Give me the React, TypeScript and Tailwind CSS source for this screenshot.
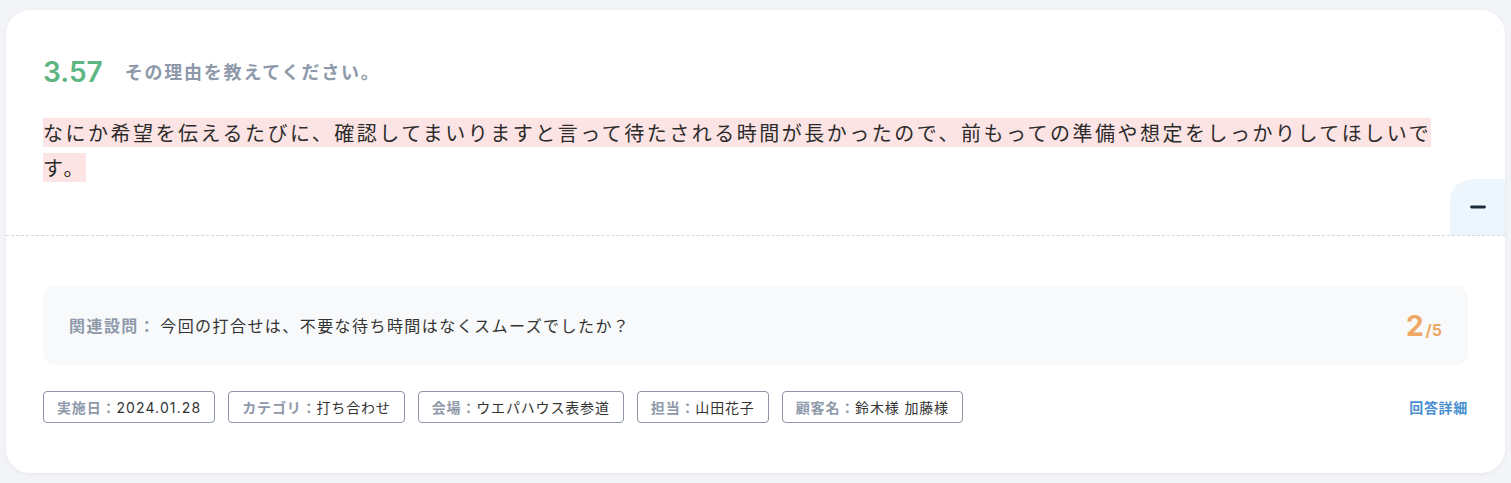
import { Minus } from "lucide-react";

const tags = [
  { label: "実施日", value: "2024.01.28" },
  { label: "カテゴリ", value: "打ち合わせ" },
  { label: "会場", value: "ウエパハウス表参道" },
  { label: "担当", value: "山田花子" },
  { label: "顧客名", value: "鈴木様 加藤様" },
];

const font = "font-['Inter','Noto_Sans_CJK_JP','Noto_Sans',sans-serif]";

export default function App() {
  return (
    <div className={`min-h-[483px] bg-[#f3f4f8] px-[6px] pt-[10px] pb-[10px] ${font}`}>
      <div className="overflow-hidden rounded-[24px] bg-white shadow-[0_1px_4px_rgba(20,30,60,0.06)]">
        {/* answer */}
        <div className="relative border-b border-dashed border-[#d4d6da] px-[37px] pt-[44px] pb-[50px]">
          <div className="flex h-[36px] items-center">
            <span className="text-[28px] font-semibold leading-none text-[#5db582]">3.57</span>
            <span className="ml-[22px] text-[18px] font-bold tracking-[0.1em] text-[#8e99aa]">
              その理由を教えてください。
            </span>
          </div>
          <p className="mt-[25px] w-[1400px] font-['Noto_Sans_CJK_JP',sans-serif] text-[20px] leading-[35px] tracking-[0.125em] text-[#2b2b2b]">
            <span className="bg-[#fde4e4]">
              なにか希望を伝えるたびに、確認してまいりますと言って待たされる時間が長かったので、前もっての準備や想定をしっかりしてほしいです。
            </span>
          </p>
          <button className="absolute right-0 bottom-0 flex h-[56px] w-[55px] items-center justify-center rounded-tl-[22px] bg-[#eef6fd] text-[#1e2b3a]">
            <Minus size={22} strokeWidth={3.2} />
          </button>
        </div>

        {/* related */}
        <div className="px-[37px] pt-[50px] pb-[50px]">
          <div className="flex h-[79px] items-center justify-between rounded-[12px] bg-[#f8f9fb] px-[26px]">
            <div className="flex items-center text-[16px] tracking-[0.09em]">
              <span className="font-bold text-[#8e99aa]">関連設問：</span>
              <span className="ml-[4px] text-[#333]">今回の打合せは、不要な待ち時間はなくスムーズでしたか？</span>
            </div>
            <div className="flex items-baseline font-bold text-[#eea863]">
              <span className="text-[28px] leading-none">2</span>
              <span className="ml-[2px] text-[16px] leading-none">/5</span>
            </div>
          </div>

          <div className="mt-[26px] flex items-center justify-between">
            <div className="flex gap-[13px]">
              {tags.map((t) => (
                <div
                  key={t.label}
                  className="flex h-[32px] items-center rounded-[4px] border border-[#8c95a3] px-[13px] text-[14px] tracking-[0.06em]"
                >
                  <span className="font-bold text-[#8e99aa]">{t.label}：</span>
                  <span className={t.label === "実施日" ? "tracking-[0.08em] text-[#333]" : "text-[#333]"}>
                    {t.value}
                  </span>
                </div>
              ))}
            </div>
            <a className="text-[14px] font-bold tracking-[0.05em] text-[#4a8fd0]" href="#">
              回答詳細
            </a>
          </div>
        </div>
      </div>
    </div>
  );
}
